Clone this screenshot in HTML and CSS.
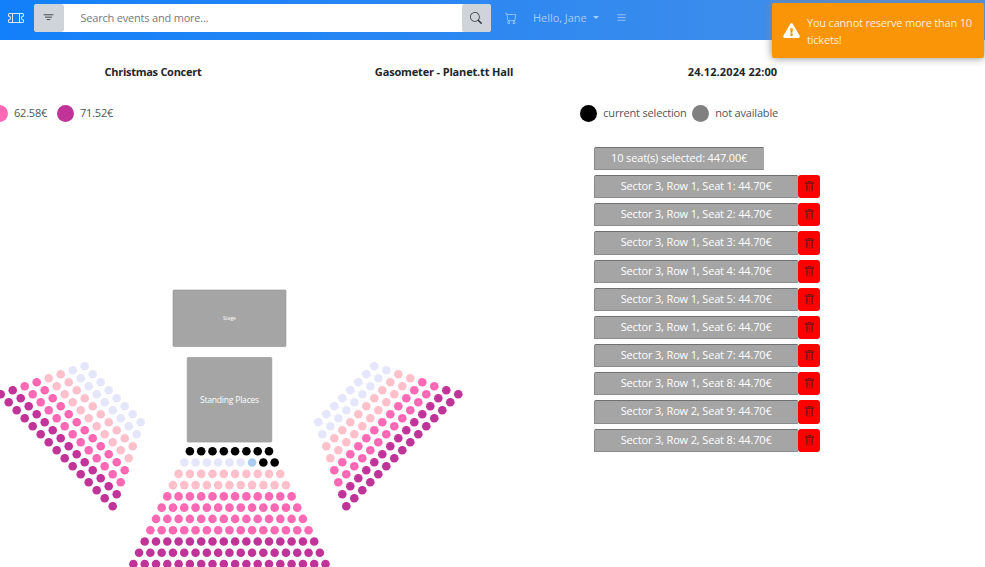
FILE: index.html
```html
<!DOCTYPE html>
<html lang="en">
<head>
<meta charset="utf-8">
<title>Seat reservation</title>
<link rel="stylesheet" href="styles.css">
</head>
<body>
<nav class="navbar">
  <svg class="brand" viewBox="0 0 16 16" fill="currentColor"><path d="M0 4.500A1.500 1.500 0 0 1 1.500 3h13A1.500 1.500 0 0 1 16 4.500V6a.5.5 0 0 1-.5.5 1.500 1.500 0 0 0 0 3 .5.5 0 0 1 .5.5v1.500a1.500 1.500 0 0 1-1.500 1.500h-13A1.500 1.500 0 0 1 0 11.500V10a.5.5 0 0 1 .5-.5 1.500 1.500 0 1 0 0-3A.5.5 0 0 1 0 6zM1.500 4a.5.5 0 0 0-.5.5v1.050a2.500 2.500 0 0 1 0 4.900v1.050a.5.5 0 0 0 .5.5H4V4zM5 4v8h6V4zm7 0v8h2.500a.5.5 0 0 0 .5-.5v-1.050a2.500 2.500 0 0 1 0-4.900V4.500a.5.5 0 0 0-.5-.5z"/></svg>
  <div class="search">
    <button class="search-btn"><svg class="i11" viewBox="0 0 16 16" stroke="currentColor" stroke-width="1.300" stroke-linecap="round"><path d="M1.500 4h13M3.500 7.500h9M6 11h4"/></svg></button>
    <span class="placeholder">Search events and more...</span>
    <button class="search-btn"><svg class="i12" viewBox="0 0 16 16" fill="currentColor"><path d="M11.742 10.344a6.500 6.500 0 1 0-1.397 1.398h-.001q.044.06.098.115l3.850 3.850a1 1 0 0 0 1.415-1.414l-3.850-3.850a1 1 0 0 0-.115-.1zM12 6.500a5.500 5.500 0 1 1-11 0 5.500 5.500 0 0 1 11 0"/></svg></button>
  </div>
  <svg class="i12 cart" viewBox="0 0 16 16" fill="currentColor"><path d="M0 1.500A.5.5 0 0 1 .5 1H2a.5.5 0 0 1 .485.379L2.890 3H14.500a.5.5 0 0 1 .491.592l-1.500 8A.5.5 0 0 1 13 12H4a.5.5 0 0 1-.491-.408L2.010 3.607 1.610 2H.5a.5.5 0 0 1-.5-.5M3.102 4l1.313 7h8.170l1.313-7zM5 12a2 2 0 1 0 0 4 2 2 0 0 0 0-4m7 0a2 2 0 1 0 0 4 2 2 0 0 0 0-4m-7 1a1 1 0 1 1 0 2 1 1 0 0 1 0-2m7 0a1 1 0 1 1 0 2 1 1 0 0 1 0-2"/></svg>
  <span class="user">Hello, Jane</span><span class="caret"></span>
  <svg class="i11 burger" viewBox="0 0 16 16" stroke="currentColor" stroke-width="1.200" stroke-linecap="round"><path d="M2.500 4h11M2.500 8h11M2.500 12h11"/></svg>
</nav>

<header class="event">
  <b class="name">Christmas Concert</b>
  <b class="venue">Gasometer - Planet.tt Hall</b>
  <b class="date">24.12.2024 22:00</b>
</header>

<section class="legend">
  <i class="dot hot"></i><span class="price">62.58€</span>
  <i class="dot purple"></i><span class="price">71.52€</span>
  <i class="dot black push"></i><span class="state">current selection</span>
  <i class="dot gray"></i><span class="state">not available</span>
</section>

<main class="content">
  <svg class="plan" width="480" height="427" viewBox="0 140 480 427">
    <rect class="area" x="173" y="290" width="113" height="56.500" rx="1"/>
    <text class="area-text stage" x="229.500" y="320">Stage</text>
    <rect class="area" x="187.200" y="357.500" width="84.600" height="84.600" rx="1"/>
    <text class="area-text standing" x="229.500" y="402.700">Standing Places</text>
    <g id="seats"></g>
  </svg>
  <aside class="cart-list" id="cart">
    <div class="ticket total"><span>10 seat(s) selected: 447.00€</span></div>
  </aside>
</main>

<div class="toast">
  <svg viewBox="0 0 576 512"><path fill="currentColor" d="M569.517 440.013C587.975 472.007 564.806 512 527.940 512H48.054c-36.937 0-59.999-40.055-41.577-71.987L246.423 23.985c18.467-32.009 64.720-31.951 83.154 0l239.940 416.028zM288 354c-25.405 0-46 20.595-46 46s20.595 46 46 46 46-20.595 46-46-20.595-46-46-46zm-43.673-165.346l7.418 136c.347 6.364 5.609 11.346 11.982 11.346h48.546c6.373 0 11.635-4.982 11.982-11.346l7.418-136c.375-6.874-5.098-12.654-11.982-12.654h-63.383c-6.884 0-12.356 5.780-11.981 12.654z"/></svg>
  <p>You cannot reserve more than 10<br>tickets!</p>
</div>
<script src="script.js"></script>
</body>
</html>
```
FILE: styles.css
```css
* { box-sizing: border-box; }
body {
  margin: 0;
  height: 567px;
  overflow: hidden;
  background: #fff;
  color: #212529;
  font: 11px/17px "Open Sans", "Noto Sans", sans-serif;
}
svg { display: block; flex: none; }
.navbar {
  display: flex;
  align-items: center;
  height: 40px;
  padding: 0 0 5px 8px;
  color: #a5cbf8;
  background: linear-gradient(90deg, #1280fa, #4990e7);
}
.brand { width: 16px; height: 16px; color: #d5e8fe; margin-right: 10px; margin-top: 1px; }
.search { display: flex; width: 457px; height: 28px; background: #fff; border-radius: 3px; }
.search-btn {
  display: flex;
  align-items: center;
  justify-content: center;
  width: 29.500px;
  padding: 0;
  border: 0;
  border-radius: 3px;
  background: #ced4da;
  color: #343a40;
}
.placeholder { flex: 1; padding: 5px 17px; color: #747a80; letter-spacing: -0.200px; }
.i11 { width: 11px; height: 11px; }
.i12 { width: 12px; height: 12px; }
.cart { margin-left: 14px; }
.user { margin-left: 16px; white-space: nowrap; letter-spacing: -0.050px; }
.caret { margin-left: 6px; border: 3px solid transparent; border-top-color: currentColor; border-bottom: 0; }
.burger { margin-left: 17px; }
.event { display: grid; grid-template-columns: 306px 276px 301px; height: 63px; padding: 23px 0 0; text-align: center; }
.name { letter-spacing: -0.280px; }
.venue { letter-spacing: -0.160px; }
.date { letter-spacing: 0.100px; }
.legend { display: flex; align-items: center; width: 787px; height: 20px; margin-left: -9px; color: #50555a; white-space: nowrap; }
.dot { width: 17px; height: 17px; border-radius: 50%; margin-right: 6px; flex: none; }
.price { width: 43px; padding-bottom: 2px; letter-spacing: -0.200px; }
.state { margin-right: 5.500px; padding-bottom: 2px; letter-spacing: -0.180px; }
.state:last-child { margin-right: 0; }
.push { margin-left: auto; }
.hot { background: #ff69b4; }
.purple { background: #c03399; }
.black { background: #000; }
.gray { background: #808080; }
.content { display: flex; height: 444px; padding-top: 17px; }
.area { fill: #a5a5a5; stroke: #929292; stroke-width: 0.600; }
.area-text { fill: #fff; text-anchor: middle; }
.stage { font-size: 5px; }
.standing { font-size: 8.500px; letter-spacing: -0.200px; }
.cart-list { display: flex; flex-direction: column; gap: 5px; margin: 7px 0 0 114.400px; }
.row { display: flex; }
.ticket {
  width: 203.500px;
  height: 23.170px;
  border: 1px solid #a5a5a5;
  border-top-color: #707070;
  border-left-color: #8a8a8a;
  border-bottom-color: #8c8c8c;
  border-top-left-radius: 2px;
  background: #a5a5a5;
  color: #fff;
  text-align: center;
  line-height: 19px;
  letter-spacing: -0.150px;
  white-space: nowrap;
}
.total { width: 169.500px; }
.remove {
  display: flex;
  align-items: center;
  justify-content: center;
  width: 22.500px;
  height: 23.170px;
  padding: 0;
  border: 0;
  border-radius: 3px;
  background: #f00;
  color: #651216;
}
.toast {
  position: absolute;
  top: 3px;
  right: 1px;
  display: flex;
  align-items: center;
  width: 212px;
  height: 55px;
  padding: 0 10px 0 11px;
  border-radius: 2px;
  background: #fa9507;
  box-shadow: 0 0 8px #888;
  color: #fff;
  white-space: nowrap;
}
.toast svg { width: 17px; height: 15px; margin-right: 7px; }
.toast p { margin: 0; color: #feeed8; letter-spacing: -0.200px; }
```
FILE: script.js
```js
const COLORS = ["#e6e6fa", "#ffc0cb", "#ff69b4", "#c03399"];
const TRASH = '<svg class="i11" viewBox="0 0 16 16" fill="currentColor"><path d="M5.500 5.500A.5.5 0 0 1 6 6v6a.5.5 0 0 1-1 0V6a.5.5 0 0 1 .5-.5m2.500 0a.5.5 0 0 1 .5.5v6a.5.5 0 0 1-1 0V6a.5.5 0 0 1 .5-.5m3 .5a.5.5 0 0 0-1 0v6a.5.5 0 0 0 1 0z"/><path d="M14.500 3a1 1 0 0 1-1 1H13v9a2 2 0 0 1-2 2H5a2 2 0 0 1-2-2V4h-.5a1 1 0 0 1-1-1V2a1 1 0 0 1 1-1H6a1 1 0 0 1 1-1h2a1 1 0 0 1 1 1h3.500a1 1 0 0 1 1 1zM4.118 4 4 4.059V13a1 1 0 0 0 1 1h6a1 1 0 0 0 1-1V4.059L11.882 4zM2.500 3h11V2h-11z"/></svg>';

let seats = "";
function seat(x, y, color) {
  seats += `<circle cx="${x}" cy="${y}" r="4.300" fill="${color}"/>`;
}

// Side sectors: eight slanted rows, two per price category
for (let r = 0; r < 8; r++) {
  for (let s = 0; s < 8 + r; s++) {
    const y = 366.200 + 4 * r + 8 * s;
    const color = COLORS[r >> 1];
    seat(84.700 - 12 * r + 8 * s, y, color);
    seat(374.300 + 12 * r - 8 * s, y, color);
  }
}

// Centre sector
const rowCategory = [0, 0, 1, 1, 2, 2, 2, 2, 3, 3, 3];
for (let r = 0; r < 11; r++) {
  for (let s = 0; s < 8 + r; s++) {
    let color = COLORS[rowCategory[r]];
    if (r === 0 || (r === 1 && s > 6)) color = "#000";
    if (r === 1 && s === 6) color = "#a9cdf0";
    seat(189.900 - 5.650 * r + 11.300 * s, 451.300 + 11.270 * r, color);
  }
}
document.getElementById("seats").innerHTML = seats;

const picked = [[1, 1], [1, 2], [1, 3], [1, 4], [1, 5], [1, 6], [1, 7], [1, 8], [2, 9], [2, 8]];
document.getElementById("cart").insertAdjacentHTML("beforeend", picked.map(([row, s]) =>
  `<div class="row"><div class="ticket"><span>Sector 3, Row ${row}, Seat ${s}: 44.70€</span></div><button class="remove">${TRASH}</button></div>`
).join(""));
```
